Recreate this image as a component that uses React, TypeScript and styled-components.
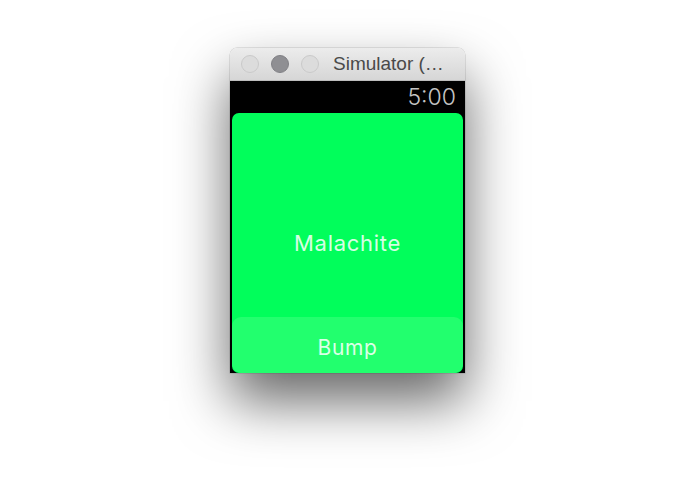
import React from "react";
import styled, { createGlobalStyle } from "styled-components";

const Global = createGlobalStyle`
  html, body { margin: 0; padding: 0; background: #ffffff; }
  body { font-family: Inter, "Liberation Sans", sans-serif; }
`;

const Page = styled.div`
  display: flex;
  justify-content: center;
  align-items: flex-start;
  padding-top: 48px;
  height: 494px;
  box-sizing: border-box;
`;

const Window = styled.div`
  width: 235px;
  display: flex;
  flex-direction: column;
  border-radius: 7px 7px 0 0;
  overflow: hidden;
  box-shadow: 0 28px 55px rgba(0, 0, 0, 0.6), 0 0 0 0.5px rgba(0, 0, 0, 0.18);
`;

const TitleBar = styled.div`
  height: 33px;
  display: flex;
  align-items: center;
  padding-left: 11px;
  gap: 12px;
  background: linear-gradient(#ececec, #d6d6d6);
  border-bottom: 1px solid #bdbdbd;
  box-sizing: border-box;
`;

const Light = styled.span<{ $dark?: boolean }>`
  width: 18px;
  height: 18px;
  border-radius: 50%;
  box-sizing: border-box;
  background: ${(p) => (p.$dark ? "#8f8f93" : "#dcdcdc")};
  border: 1px solid ${(p) => (p.$dark ? "#808085" : "#c9c9c9")};
  flex: none;
`;

const Title = styled.span`
  margin-left: 2px;
  font-family: "Liberation Sans", Arial, sans-serif;
  font-size: 19px;
  color: #4a4a4a;
  white-space: nowrap;
`;

const Screen = styled.div`
  height: 292px;
  background: #000;
  display: flex;
  flex-direction: column;
  padding: 0 2px 0 2px;
`;

const StatusBar = styled.div`
  height: 32px;
  display: flex;
  align-items: center;
  justify-content: flex-end;
  padding-right: 7px;
  font-size: 23px;
  color: #c4c4c4;
  font-weight: 300;
  flex: none;
`;

const Card = styled.div`
  flex: 1;
  display: grid;
  background: #01fe5b;
  border-radius: 7px;
  overflow: hidden;
`;

const Label = styled.div`
  grid-area: 1 / 1;
  align-self: center;
  justify-self: center;
  font-size: 22px;
  letter-spacing: 0.7px;
  color: rgba(255, 255, 255, 0.85);
  font-weight: 400;
`;

const Button = styled.div`
  grid-area: 1 / 1;
  align-self: end;
  height: 56px;
  box-sizing: border-box;
  padding-top: 4px;
  border-radius: 9px;
  background: #22ff6e;
  display: flex;
  align-items: center;
  justify-content: center;
  font-size: 21px;
  letter-spacing: 0.6px;
  color: rgba(255, 255, 255, 0.85);
`;

export default function App() {
  return (
    <>
      <Global />
      <Page>
        <Window>
          <TitleBar>
            <Light />
            <Light $dark />
            <Light />
            <Title>Simulator (…</Title>
          </TitleBar>
          <Screen>
            <StatusBar>5:00</StatusBar>
            <Card>
              <Label>Malachite</Label>
              <Button>Bump</Button>
            </Card>
          </Screen>
        </Window>
      </Page>
    </>
  );
}
